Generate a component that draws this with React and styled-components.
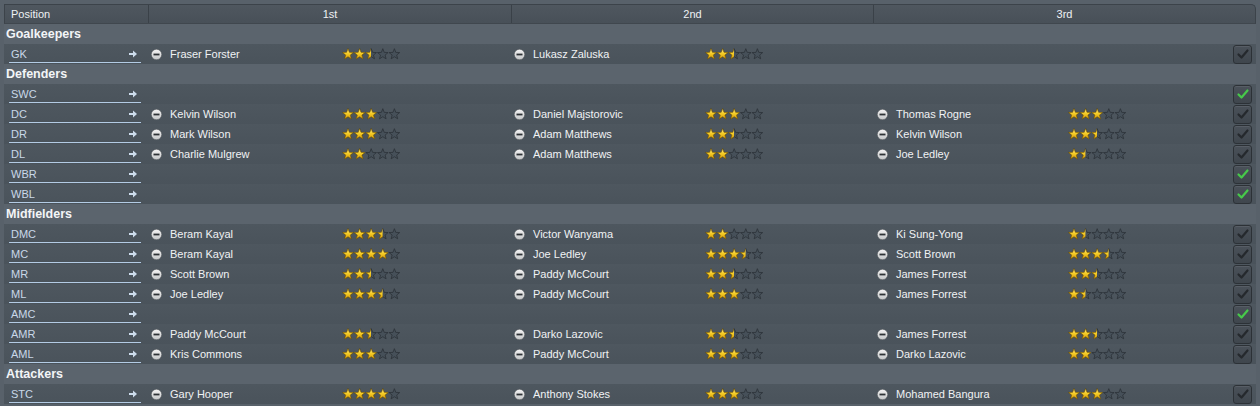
import { useId } from "react";
import styled, { createGlobalStyle } from "styled-components";

const GlobalStyle = createGlobalStyle`
  html, body {
    margin: 0;
    padding: 0;
    background: #58616a;
    font-family: "Liberation Sans", Arial, sans-serif;
  }
`;

const groups = [
  {
    title: "Goalkeepers",
    rows: [
      { pos: "GK", players: [["Fraser Forster", 2.5], ["Lukasz Zaluska", 2.5]] },
    ],
  },
  {
    title: "Defenders",
    rows: [
      { pos: "SWC", players: [], ok: true },
      { pos: "DC", players: [["Kelvin Wilson", 3], ["Daniel Majstorovic", 3], ["Thomas Rogne", 3]] },
      { pos: "DR", players: [["Mark Wilson", 3], ["Adam Matthews", 2.5], ["Kelvin Wilson", 2.5]] },
      { pos: "DL", players: [["Charlie Mulgrew", 2], ["Adam Matthews", 2], ["Joe Ledley", 1.5]] },
      { pos: "WBR", players: [], ok: true },
      { pos: "WBL", players: [], ok: true },
    ],
  },
  {
    title: "Midfielders",
    rows: [
      { pos: "DMC", players: [["Beram Kayal", 3.5], ["Victor Wanyama", 2], ["Ki Sung-Yong", 1.5]] },
      { pos: "MC", players: [["Beram Kayal", 4], ["Joe Ledley", 3.5], ["Scott Brown", 3.5]] },
      { pos: "MR", players: [["Scott Brown", 2.5], ["Paddy McCourt", 2.5], ["James Forrest", 2.5]] },
      { pos: "ML", players: [["Joe Ledley", 3.5], ["Paddy McCourt", 3], ["James Forrest", 1.5]] },
      { pos: "AMC", players: [], ok: true },
      { pos: "AMR", players: [["Paddy McCourt", 2.5], ["Darko Lazovic", 2.5], ["James Forrest", 2.5]] },
      { pos: "AML", players: [["Kris Commons", 3], ["Paddy McCourt", 3], ["Darko Lazovic", 2]] },
    ],
  },
  {
    title: "Attackers",
    rows: [
      { pos: "STC", players: [["Gary Hooper", 4], ["Anthony Stokes", 3], ["Mohamed Bangura", 3]] },
    ],
  },
];

const STAR =
  "6,0.7 7.41,4.36 11.33,4.57 8.28,7.04 9.29,10.83 6,8.7 2.71,10.83 3.72,7.04 0.67,4.57 4.59,4.36";

function Stars({ rating }) {
  const id = useId().replace(/:/g, "");
  return (
    <svg width="60" height="12" viewBox="0 0 60 12">
      <defs>
        <linearGradient id={`g${id}`} x1="0" y1="0" x2="0" y2="1">
          <stop offset="0" stopColor="#fff0a0" />
          <stop offset="0.45" stopColor="#f6cf2a" />
          <stop offset="1" stopColor="#d99c08" />
        </linearGradient>
        <clipPath id={`c${id}`}>
          <rect x="0" y="0" width={rating * 11.6} height="12" />
        </clipPath>
      </defs>
      {[0, 1, 2, 3, 4].map((i) => (
        <polygon
          key={`e${i}`}
          points={STAR}
          transform={`translate(${i * 11.6} 0)`}
          fill="#465059"
          stroke="#2c3238"
          strokeWidth="0.8"
        />
      ))}
      <g clipPath={`url(#c${id})`}>
        {[0, 1, 2, 3, 4].map((i) => (
          <polygon
            key={`f${i}`}
            points={STAR}
            transform={`translate(${i * 11.6} 0)`}
            fill={`url(#g${id})`}
            stroke="#8d6a0c"
            strokeWidth="0.7"
          />
        ))}
      </g>
    </svg>
  );
}

function MinusIcon() {
  return (
    <svg width="11" height="11" viewBox="0 0 11 11">
      <defs>
        <linearGradient id="mi" x1="0" y1="0" x2="0" y2="1">
          <stop offset="0" stopColor="#f4f4f4" />
          <stop offset="1" stopColor="#c4c6c8" />
        </linearGradient>
      </defs>
      <circle cx="5.5" cy="5.5" r="5.2" fill="url(#mi)" stroke="#3a3f44" strokeWidth="0.4" />
      <rect x="2.5" y="4.6" width="6" height="1.8" fill="#2e3236" />
    </svg>
  );
}

function ArrowIcon() {
  return (
    <svg width="8" height="8" viewBox="0 0 8 8">
      <rect x="0" y="3" width="4.5" height="2" fill="#cddcec" />
      <polygon points="4,0.5 8,4 4,7.5" fill="#cddcec" />
    </svg>
  );
}

function Player({ name, rating }) {
  return (
    <PlayerCell>
      <MinusIcon />
      <PlayerName>{name}</PlayerName>
      <Stars rating={rating} />
    </PlayerCell>
  );
}

export default function App() {
  return (
    <>
      <GlobalStyle />
      <Page>
        <HeaderRow>
          <HeadCell $left>Position</HeadCell>
          <HeadCell>1st</HeadCell>
          <HeadCell>2nd</HeadCell>
          <HeadCell $last>3rd</HeadCell>
        </HeaderRow>
        {groups.map((g) => (
          <div key={g.title}>
            <GroupRow>{g.title}</GroupRow>
            {g.rows.map((r) => (
              <DataRow key={r.pos}>
                <PosCell>
                  <PosLabel>
                    <span>{r.pos}</span>
                    <ArrowIcon />
                  </PosLabel>
                </PosCell>
                <Slot>{r.players[0] && <Player name={r.players[0][0]} rating={r.players[0][1]} />}</Slot>
                <Slot>{r.players[1] && <Player name={r.players[1][0]} rating={r.players[1][1]} />}</Slot>
                <Slot $last>
                  {r.players[2] && <Player name={r.players[2][0]} rating={r.players[2][1]} />}
                  <CheckBox $ok={r.ok}>
                    <svg width="14" height="14" viewBox="0 0 14 14">
                      <path
                        d="M2.5 7.5 L5.5 10.5 L11.5 3.5"
                        fill="none"
                        stroke={r.ok ? "#47c94a" : "#25292d"}
                        strokeWidth="2.2"
                        strokeLinecap="round"
                        strokeLinejoin="round"
                      />
                    </svg>
                  </CheckBox>
                </Slot>
              </DataRow>
            ))}
          </div>
        ))}
      </Page>
    </>
  );
}

const cols = "144px 363px 362px 1fr";

const Page = styled.div`
  width: 1252px;
  padding: 4px 4px 0 4px;
  box-sizing: content-box;
`;

const HeaderRow = styled.div`
  display: grid;
  grid-template-columns: ${cols};
  height: 18px;
  background: linear-gradient(#4f575f, #485058);
  border: 1px solid #3c434a;
  border-bottom-color: #40474e;
  border-radius: 0 5px 0 0;
`;

const HeadCell = styled.div`
  display: flex;
  align-items: center;
  justify-content: ${(p) => (p.$left ? "flex-start" : "center")};
  padding-left: ${(p) => (p.$left ? "6px" : "0")};
  border-right: ${(p) => (p.$last ? "none" : "1px solid #3a4148")};
  color: #eef1f4;
  font-size: 11px;
`;

const GroupRow = styled.div`
  height: 20px;
  display: flex;
  align-items: center;
  padding-left: 2px;
  background: #5b646d;
  color: #f3f5f7;
  font-size: 12.5px;
  font-weight: bold;
`;

const DataRow = styled.div`
  display: grid;
  grid-template-columns: ${cols};
  height: 20px;
  background: linear-gradient(#4e575f, #4a535b);
`;

const PosCell = styled.div`
  display: flex;
  align-items: center;
  padding-left: 5px;
`;

const PosLabel = styled.div`
  width: 126px;
  height: 16px;
  margin-top: 1px;
  padding: 0 4px 0 2px;
  display: flex;
  align-items: center;
  justify-content: space-between;
  border-bottom: 1px solid #b3cbe4;
  color: #c9d8e8;
  font-size: 11px;
`;

const Slot = styled.div`
  display: flex;
  align-items: center;
  padding-left: ${(p) => (p.$last ? "4px" : "3px")};
`;

const PlayerCell = styled.div`
  display: flex;
  align-items: center;
`;

const PlayerName = styled.span`
  width: 172px;
  margin-left: 8px;
  color: #f0f2f4;
  font-size: 11px;
  white-space: nowrap;
`;

const CheckBox = styled.div`
  margin-left: auto;
  margin-right: 4px;
  width: 17px;
  height: 17px;
  display: flex;
  align-items: center;
  justify-content: center;
  border-radius: 3px;
  border: 1px solid #2c3136;
  background: linear-gradient(#4a5159, #3f464d);
  box-shadow: inset 0 1px 0 rgba(255, 255, 255, 0.08);
`;
